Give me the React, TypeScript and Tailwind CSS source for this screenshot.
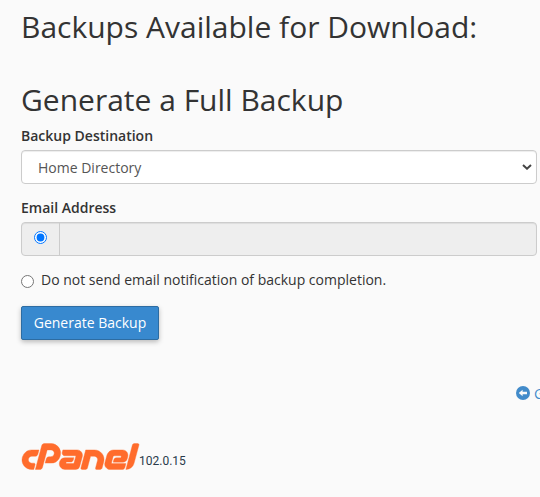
import { SiCpanel } from "react-icons/si";

function BackArrow() {
  return (
    <svg viewBox="0 0 14 14" className="h-3.5 w-3.5 shrink-0">
      <circle cx="7" cy="7" r="7" fill="#428bca" />
      <path d="M2.8 7 L6.6 3.7 V5.8 H11 V8.2 H6.6 V10.3 Z" fill="#fafafa" />
    </svg>
  );
}

function Logo() {
  return (
    <div className="flex h-[27px] w-[118px] items-center justify-center">
      <SiCpanel
        className="h-[117px] w-[117px] shrink-0 overflow-visible text-[#ff6c2c]"
        stroke="currentColor"
        strokeWidth="0.08"
      />
    </div>
  );
}

export default function App() {
  return (
    <div className="h-[497px] w-[540px] overflow-hidden bg-[#fafafa] pt-[10px] pl-[21px] font-['Open_Sans',sans-serif] text-sm leading-5 text-[#333]">
      <h2 className="text-[30px] leading-[33px]">Backups Available for Download:</h2>
      <h2 className="mt-10 text-[30px] leading-[33px]">Generate a Full Backup</h2>

      <div className="mt-[10px] w-[516px]">
        <label className="block font-semibold">Backup Destination</label>
        <div className="mt-[4px] flex h-[34px] items-center justify-between rounded border border-[#ccc] bg-white pr-[4px] pl-4 text-[#555] shadow-[inset_0_1px_1px_rgba(0,0,0,0.075)]">
          <span className="pt-[2px]">Home Directory</span>
          <svg viewBox="0 0 10 6" className="h-[6px] w-[10px]" fill="none" stroke="#444" strokeWidth="2">
            <path d="M1 1 L5 4.7 L9 1" />
          </svg>
        </div>

        <label className="mt-[14px] block font-semibold">Email Address</label>
        <div className="mt-[4px] flex h-[34px] overflow-hidden rounded border border-[#ccc] bg-[#eee] shadow-[inset_0_1px_1px_rgba(0,0,0,0.075)]">
          <div className="flex w-[38px] justify-center border-r border-[#ccc] pt-[8px]">
            <input type="radio" name="email" defaultChecked className="h-[13px] w-[13px]" />
          </div>
        </div>
      </div>

      <label className="mt-[14px] flex">
        <input type="radio" name="email" className="mt-[5px] mr-[7px] h-[13px] w-[13px]" />
        <span>Do not send email notification of backup completion.</span>
      </label>

      <button className="mt-4 block h-[34px] w-[138px] rounded-[2px] border border-[#2d6ca2] bg-[#3889cf] text-center text-white shadow-[0_2px_5px_rgba(0,0,0,0.26)]">
        Generate Backup
      </button>

      <div className="mt-[43px] ml-[495px] flex h-5 w-6 items-center gap-[4px] overflow-hidden whitespace-nowrap text-[#428bca]">
        <BackArrow />
        <span className="pt-px">Go Back</span>
      </div>

      <div className="mt-10 flex h-[27px] items-end">
        <Logo />
        <span className="font-[Roboto,sans-serif] text-xs leading-[18px] text-[#293a4a]">102.0.15</span>
      </div>
    </div>
  );
}
